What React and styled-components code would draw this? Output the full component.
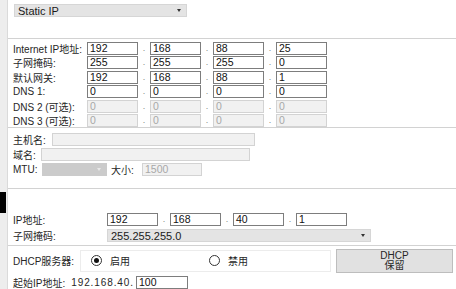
import styled, { createGlobalStyle } from 'styled-components';

const GlobalStyle = createGlobalStyle`
  body {
    margin: 0;
    background: #fff;
    font-family: "Liberation Sans", "Noto Sans CJK SC", sans-serif;
    font-size: 10px;
    color: #262626;
  }
`;

const Page = styled.div`
  display: flex;
  width: 456px;
  height: 289px;
  overflow: hidden;
  background: #fff;
`;

const SideStrip = styled.div`
  width: 8px;
  flex-shrink: 0;
  box-sizing: border-box;
  background: #ededed;
  border-right: 1px solid #dadada;
  padding-top: 192px;
`;

const SideMark = styled.div`
  width: 6px;
  height: 21px;
  background: #000;
`;

const Main = styled.div`
  flex: 1;
  display: flex;
  flex-direction: column;
`;

const Top = styled.div`
  height: 38px;
  box-sizing: border-box;
  padding: 4px 0 0 6px;
`;

const Select = styled.div`
  width: ${p => p.w}px;
  height: 13px;
  box-sizing: border-box;
  display: flex;
  align-items: center;
  justify-content: space-between;
  padding: 0 5px 0 3px;
  background: ${p => (p.disabled ? '#cbcbcb' : '#e4e4e4')};
  border: 1px solid ${p => (p.disabled ? '#cbcbcb' : '#d6d6d6')};
  font-size: 11px;
  color: #1a1a1a;
`;

const Arrow = styled.span`
  width: 0;
  height: 0;
  border-left: 2.5px solid transparent;
  border-right: 2.5px solid transparent;
  border-top: 3px solid ${p => (p.light ? '#e8e8e8' : '#333')};
`;

const Divider = styled.div`
  height: 1px;
  background: #d2d2d2;
  margin-top: ${p => p.mt || 0}px;
`;

const IpSection = styled.div`
  display: flex;
  flex-direction: column;
  gap: 1.5px;
  padding: 3px 0 0 5px;
`;

const Row = styled.div`
  display: flex;
  align-items: center;
  height: 13px;
`;

const Label = styled.span`
  width: ${p => p.w}px;
  flex-shrink: 0;
  white-space: nowrap;
`;

const Box = styled.div`
  width: ${p => p.w || 51}px;
  height: 13px;
  box-sizing: border-box;
  border: 1px solid ${p => (p.disabled ? '#d3d3d3' : '#7d7d7d')};
  background: ${p => (p.disabled ? '#f1f1f1' : '#fff')};
  color: ${p => (p.disabled ? '#a8a8a8' : '#111')};
  padding-left: 2px;
  line-height: 11px;
  font-size: 10.5px;
  margin-left: ${p => p.ml || 0}px;
`;

const Dot = styled.span`
  width: 12px;
  text-align: center;
  color: #888;
  font-size: 9px;
  line-height: 17px;
`;

const HostSection = styled.div`
  display: flex;
  flex-direction: column;
  gap: 2px;
  padding: 5px 0 0 5px;
`;

const LanSection = styled.div`
  display: flex;
  flex-direction: column;
  gap: 3px;
  padding: 24px 0 0 5px;
`;

const DhcpRow = styled.div`
  display: flex;
  align-items: center;
  padding: 3px 0 0 5px;
  height: 24px;
`;

const RadioGroup = styled.div`
  width: 251px;
  height: 22px;
  box-sizing: border-box;
  border: 1px solid #ececec;
  display: flex;
  align-items: center;
  padding-left: 10px;
`;

const RadioItem = styled.label`
  display: flex;
  align-items: center;
  gap: 8px;
  width: ${p => p.w || 'auto'};
`;

const Circle = styled.span`
  width: 11px;
  height: 11px;
  box-sizing: border-box;
  border-radius: 50%;
  border: 1px solid #333;
  display: flex;
  align-items: center;
  justify-content: center;
  &::after {
    content: '';
    width: 5px;
    height: 5px;
    border-radius: 50%;
    background: ${p => (p.on ? '#111' : 'transparent')};
  }
`;

const Button = styled.div`
  width: 117px;
  height: 24px;
  margin-left: 5px;
  box-sizing: border-box;
  background: #e1e1e1;
  border: 1px solid #bdbdbd;
  display: flex;
  flex-direction: column;
  align-items: center;
  justify-content: center;
  line-height: 10px;
  font-size: 10px;
`;

const StartRow = styled.div`
  display: flex;
  align-items: center;
  height: 13px;
  padding: 3px 0 0 5px;
`;

const Prefix = styled.span`
  letter-spacing: 0.9px;
  margin-left: 6px;
`;

const octetRows = [
  { label: 'Internet IP地址:', values: ['192', '168', '88', '25'] },
  { label: '子网掩码:', values: ['255', '255', '255', '0'] },
  { label: '默认网关:', values: ['192', '168', '88', '1'] },
  { label: 'DNS 1:', values: ['0', '0', '0', '0'] },
  { label: 'DNS 2 (可选):', values: ['0', '0', '0', '0'], disabled: true },
  { label: 'DNS 3 (可选):', values: ['0', '0', '0', '0'], disabled: true },
];

const Octets = ({ values, disabled }) => (
  <>
    {values.map((v, i) => (
      <span key={i} style={{ display: 'contents' }}>
        {i > 0 && <Dot>.</Dot>}
        <Box disabled={disabled}>{v}</Box>
      </span>
    ))}
  </>
);

export default function App() {
  return (
    <Page>
      <GlobalStyle />
      <SideStrip>
        <SideMark />
      </SideStrip>
      <Main>
        <Top>
          <Select w={173}>
            Static IP
            <Arrow />
          </Select>
        </Top>
        <Divider />
        <IpSection>
          {octetRows.map(r => (
            <Row key={r.label}>
              <Label w={74}>{r.label}</Label>
              <Octets values={r.values} disabled={r.disabled} />
            </Row>
          ))}
        </IpSection>
        <Divider mt={0} />
        <HostSection>
          <Row>
            <Label w={39}>主机名:</Label>
            <Box disabled w={203} />
          </Row>
          <Row>
            <Label w={28}>域名:</Label>
            <Box disabled w={209} />
          </Row>
          <Row>
            <Label w={29}>MTU:</Label>
            <Select w={65} disabled>
              <span />
              <Arrow light />
            </Select>
            <Label w={31} style={{ marginLeft: 4 }}>大小:</Label>
            <Box disabled w={60}>1500</Box>
          </Row>
        </HostSection>
        <Divider mt={12} />
        <LanSection>
          <Row>
            <Label w={94}>IP地址:</Label>
            <Octets values={['192', '168', '40', '1']} />
          </Row>
          <Row>
            <Label w={94}>子网掩码:</Label>
            <Select w={264}>
              255.255.255.0
              <Arrow />
            </Select>
          </Row>
        </LanSection>
        <Divider mt={3} />
        <DhcpRow>
          <Label w={67}>DHCP服务器:</Label>
          <RadioGroup>
            <RadioItem w="118px">
              <Circle on />
              启用
            </RadioItem>
            <RadioItem>
              <Circle />
              禁用
            </RadioItem>
          </RadioGroup>
          <Button>
            <span>DHCP</span>
            <span>保留</span>
          </Button>
        </DhcpRow>
        <StartRow>
          起始IP地址:
          <Prefix>192.168.40.</Prefix>
          <Box w={52} ml={2}>100</Box>
        </StartRow>
      </Main>
    </Page>
  );
}
